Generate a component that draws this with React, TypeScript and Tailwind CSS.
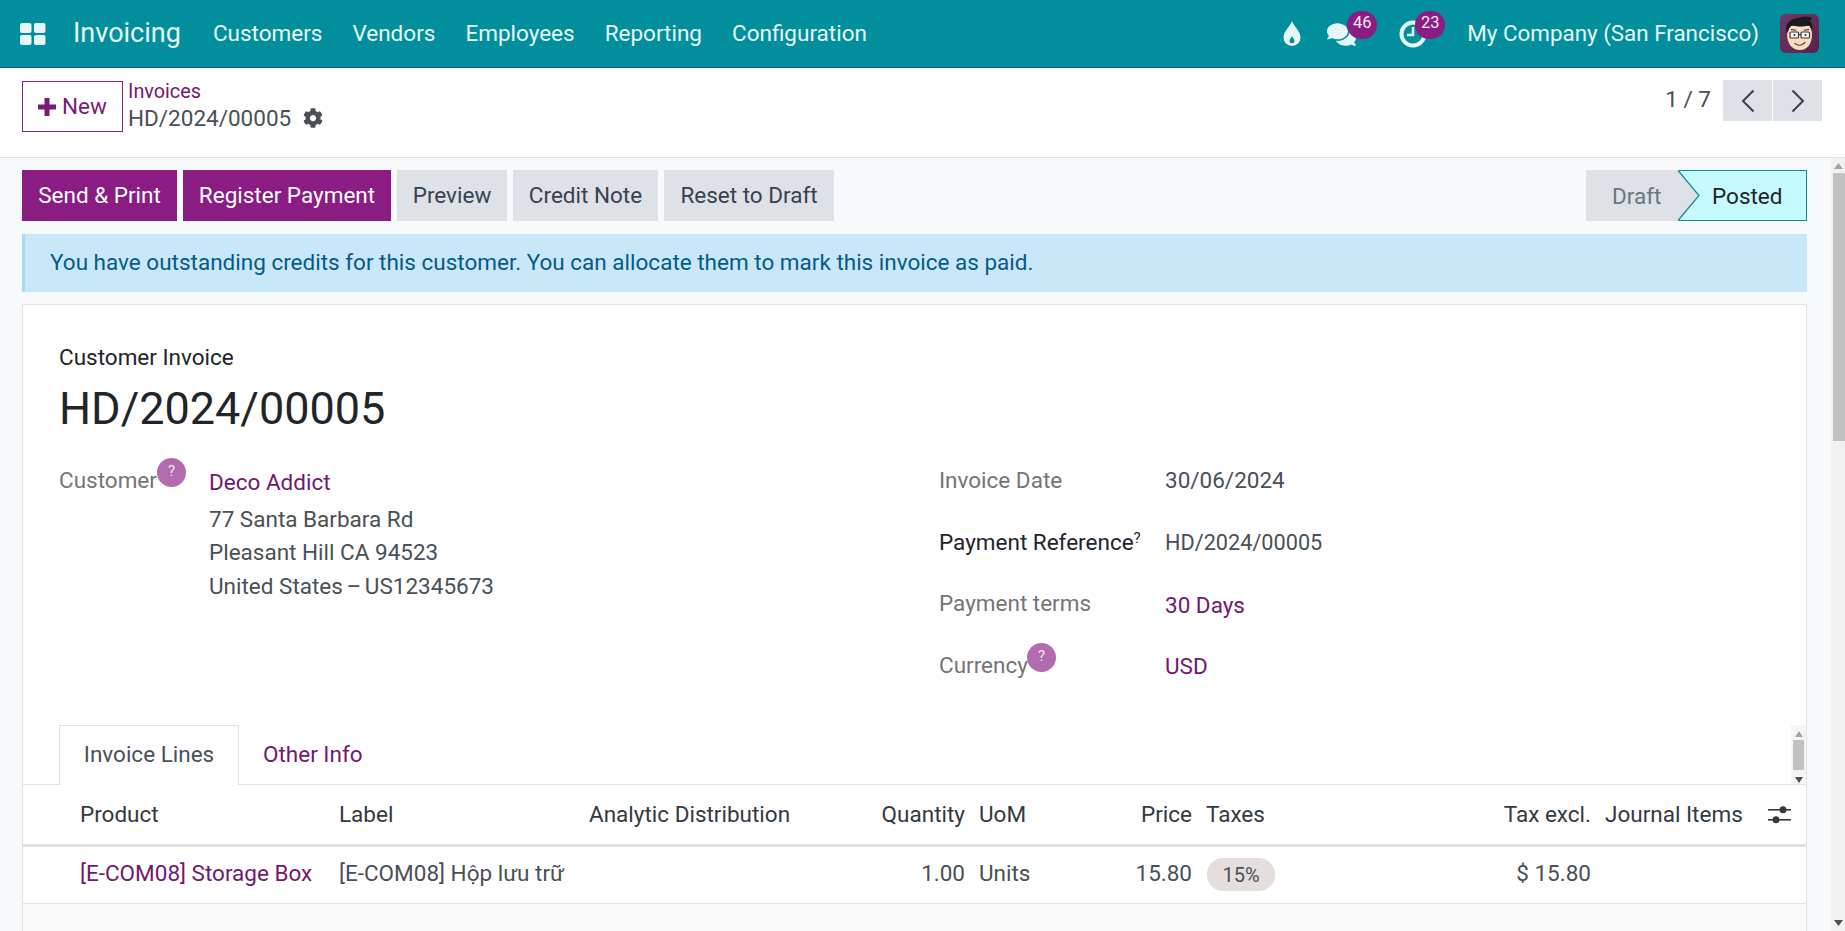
import { FaCog, FaComments } from "react-icons/fa";

const navItems = ["Customers", "Vendors", "Employees", "Reporting", "Configuration"];

function AppsIcon() {
  return (
    <svg width="26" height="22" viewBox="0 0 26 22" fill="#e6f6f7">
      <rect x="0" y="0" width="11.5" height="10" rx="2" />
      <rect x="14" y="0" width="11.5" height="10" rx="2" />
      <rect x="0" y="12" width="11.5" height="10" rx="2" />
      <rect x="14" y="12" width="11.5" height="10" rx="2" />
    </svg>
  );
}

function DropIcon() {
  return (
    <svg width="18" height="26" viewBox="0 0 18 26">
      <path d="M9 0c1.500 5 8.500 10 8.500 16.500a8.500 8.500 0 0 1-17 0C.5 10 7.500 5 9 0z" fill="#e6f6f7" />
      <path d="M9 15c.6 1.800 2.500 3 2.500 4.800a2.500 2.500 0 0 1-5 0C6.500 18 8.400 16.800 9 15z" fill="#018f9e" />
    </svg>
  );
}

function ClockIcon() {
  return (
    <svg width="28" height="28" viewBox="0 0 28 28" fill="none" stroke="#e6f6f7">
      <circle cx="14" cy="14" r="11.500" strokeWidth="4" />
      <path d="M14 7v8H8" strokeWidth="2.500" />
    </svg>
  );
}

function Avatar() {
  return (
    <svg width="39" height="39" viewBox="0 0 39 39">
      <defs>
        <linearGradient id="avatarBg" x1="0" y1="0" x2="1" y2="1">
          <stop offset="0" stopColor="#6e3a68" />
          <stop offset="1" stopColor="#5a1f45" />
        </linearGradient>
      </defs>
      <rect width="39" height="39" rx="6" fill="url(#avatarBg)" />
      <path d="M7 19c0 11 5 17 13 17s12-7 12-16l-1-8H8z" fill="#f9dcc4" />
      <path d="M7 20C4 11 9 4 19 4c4-2 9-2 13 0l-2 3c2 2 3 6 2 10l-3-6c-5 2-12 2-16 0-3 1-4 4-6 9z" fill="#1b1b20" />
      <path d="M11 15.500l5 .7M24 16.200l5-.7" stroke="#2a2a2e" strokeWidth="1.100" />
      <rect x="10" y="18" width="8.500" height="6" rx="1" fill="#fbf5ec" stroke="#3a3a3e" strokeWidth="1.200" />
      <rect x="21" y="18" width="8.500" height="6" rx="1" fill="#fbf5ec" stroke="#3a3a3e" strokeWidth="1.200" />
      <path d="M18.500 20.500h2.500" stroke="#3a3a3e" strokeWidth="1.100" />
      <circle cx="14.500" cy="21" r="1" fill="#2a2a2e" />
      <circle cx="25.500" cy="21" r="1" fill="#2a2a2e" />
      <path d="M15 29.500c3 2.500 7 2 10-1" stroke="#7c3a2e" strokeWidth="1.200" fill="none" strokeLinecap="round" />
    </svg>
  );
}

function Count({ value, className }: { value: number; className: string }) {
  return (
    <span className={`absolute top-[11px] flex h-[28px] w-[30px] items-center justify-center rounded-full bg-[#8a1c83] pb-[3px] text-[16.500px] text-[#f2e6f1] ${className}`}>
      {value}
    </span>
  );
}

function Help({ className }: { className: string }) {
  return (
    <span className={`absolute flex h-[29px] w-[29px] items-center justify-center rounded-full bg-[#b36bb0] pb-[3px] text-[15px] text-[#f2e3f1] ${className}`}>
      ?
    </span>
  );
}

function Navbar() {
  return (
    <header className="flex h-[68px] shrink-0 items-center border-b border-[#0b6570] bg-[#018f9e] text-[#e6f6f7]">
      <div className="ml-[20px]">
        <AppsIcon />
      </div>
      <span className="ml-[27px] text-[27px]">Invoicing</span>
      <nav className="ml-[32px] flex gap-[30px] text-[22.500px]">
        {navItems.map((item) => (
          <span key={item}>{item}</span>
        ))}
      </nav>
      <div className="ml-auto flex items-center">
        <DropIcon />
        <div className="relative ml-[26px] flex h-[67px] w-[29px] items-center">
          <FaComments className="mt-[1px] text-[29px]" />
          <Count value={46} className="left-[20px]" />
        </div>
        <div className="relative ml-[43px] flex h-[67px] w-[28px] items-center">
          <ClockIcon />
          <Count value={23} className="left-[16px]" />
        </div>
        <span className="ml-[40px] text-[22.400px]">My Company (San Francisco)</span>
        <div className="ml-[21px] mr-[26px] h-[39px]">
          <Avatar />
        </div>
      </div>
    </header>
  );
}

function ControlPanel() {
  return (
    <div className="flex h-[90px] shrink-0 border-b border-[#dee2e6] bg-white">
      <button className="ml-[22px] mt-[13px] flex h-[51px] w-[101px] items-center justify-center gap-[6px] border border-[#7c2a78] text-[22.500px] text-[#7a1c76]">
        <svg width="18" height="18" viewBox="0 0 18 18" fill="#7a1c76">
          <path d="M6.500 0h5v6.500H18v5h-6.500V18h-5v-6.500H0v-5h6.500z" />
        </svg>
        New
      </button>
      <div className="ml-[5px] mt-[11px] flex flex-col">
        <span className="text-[19.800px] leading-[26px] text-[#71196f]">Invoices</span>
        <div className="-mt-px flex items-center gap-[12px] text-[22.500px] leading-[28px] text-[#495057]">
          HD/2024/00005
          <FaCog className="text-[20px]" />
        </div>
      </div>
      <div className="ml-auto mr-[23px] mt-[12px] flex h-[41px]">
        <span className="mr-[12px] text-[22.500px] leading-[38px] text-[#495057]">1 / 7</span>
        <button className="flex w-[49px] items-center justify-center bg-[#dee2e6]">
          <svg width="14" height="24" viewBox="0 0 14 24" fill="none" stroke="#374151" strokeWidth="2">
            <path d="M12.500 1.500 2 12l10.500 10.500" />
          </svg>
        </button>
        <button className="ml-[1px] flex w-[49px] items-center justify-center bg-[#dee2e6]">
          <svg width="14" height="24" viewBox="0 0 14 24" fill="none" stroke="#374151" strokeWidth="2">
            <path d="M1.500 1.500 12 12 1.500 22.500" />
          </svg>
        </button>
      </div>
    </div>
  );
}

function ActionBar() {
  return (
    <div className="mt-[12px] flex h-[51px] shrink-0 items-stretch text-[22.500px]">
      <button className="w-[155px] bg-[#8a1c83] text-white">Send &amp; Print</button>
      <button className="ml-[6px] w-[208px] bg-[#8a1c83] text-white">Register Payment</button>
      <button className="ml-[6px] w-[110px] bg-[#dee2e6] text-[#374151]">Preview</button>
      <button className="ml-[6px] w-[145px] bg-[#dee2e6] text-[#374151]">Credit Note</button>
      <button className="ml-[6px] w-[170px] bg-[#dee2e6] text-[#374151]">Reset to Draft</button>
      <div className="ml-auto flex">
        <div className="flex w-[92px] items-center bg-[#dee2e6] pl-[26px] pt-[2px] text-[#6c757d]">Draft</div>
        <div className="relative flex w-[129px] items-center border-y border-r border-[#118a96] bg-[#c5fbff] pl-[34px] pt-[2px] text-[#212529]">
          <svg className="absolute -top-px left-0" width="23" height="51" viewBox="0 0 23 51">
            <path d="M0 0 21 25.500 0 51z" fill="#dee2e6" />
            <path d="M0 .5 21 25.500 0 50.500" fill="none" stroke="#118a96" strokeWidth="1.200" />
          </svg>
          Posted
        </div>
      </div>
    </div>
  );
}

function InvoiceHeader() {
  return (
    <div className="flex pl-[36px]">
      <div className="relative w-[880px] text-[22.500px]">
        <div className="pt-[16px] leading-[30px] text-[#757575]">Customer</div>
        <Help className="left-[98px] top-[9px]" />
        <div className="absolute left-[150px] top-0 pt-[18px] text-[#495057]">
          <div className="leading-[30px] text-[#71196f]">Deco Addict</div>
          <div className="mt-[6px] leading-[33.300px]">
            77 Santa Barbara Rd
            <br />
            Pleasant Hill CA 94523
            <br />
            United States <span className="mx-[-2px]">–</span> US12345673
          </div>
        </div>
      </div>
      <div className="pt-px text-[22.500px]">
        <div className="flex h-[62px] items-center">
          <span className="w-[226px] text-[#757575]">Invoice Date</span>
          <span className="text-[#495057]">30/06/2024</span>
        </div>
        <div className="flex h-[62px] items-center">
          <span className="w-[226px] text-[#212529]">
            Payment Reference<sup className="text-[15px]">?</sup>
          </span>
          <span className="text-[21.700px] text-[#495057]">HD/2024/00005</span>
        </div>
        <div className="flex h-[62px] items-center">
          <span className="mb-[2px] w-[226px] text-[#757575]">Payment terms</span>
          <span className="mt-[2px] text-[#71196f]">30 Days</span>
        </div>
        <div className="relative flex h-[62px] items-center">
          <span className="mb-[2px] w-[226px] text-[#757575]">Currency</span>
          <span className="text-[#71196f]">USD</span>
          <Help className="left-[88px] top-[7px]" />
        </div>
      </div>
    </div>
  );
}

function Tabs() {
  return (
    <div className="relative mt-[27px] flex h-[60px] border-b border-[#dee2e6] pl-[36px] text-[22.500px]">
      <div className="flex h-[60px] w-[180px] items-center justify-center border-x border-t border-[#dee2e6] bg-white pb-[2px] text-[#495057]">
        Invoice Lines
      </div>
      <div className="ml-[24px] flex items-center text-[#71196f]">Other Info</div>
      <div className="absolute right-0 top-0 flex h-[59px] w-[15px] flex-col items-center bg-[#f5f5f5]">
        <svg className="mt-[6px]" width="8" height="6" viewBox="0 0 8 6" fill="#a3a3a3">
          <path d="M4 0 8 6H0z" />
        </svg>
        <div className="mt-[3px] h-[30px] w-[11px] bg-[#c1c1c1]" />
        <svg className="mt-[7px]" width="8" height="6" viewBox="0 0 8 6" fill="#505050">
          <path d="M4 6 8 0H0z" />
        </svg>
      </div>
    </div>
  );
}

function Lines() {
  const cols = "grid grid-cols-[316px_250px_211px_165px_120px_107px_209px_190px_169px_1fr] items-center";
  return (
    <div>
      <div className={`${cols} h-[62px] border-b-[3px] border-[#dee2e6] text-[22.500px] text-[#343a40]`}>
        <span className="pl-[57px]">Product</span>
        <span>Label</span>
        <span>Analytic Distribution</span>
        <span className="text-right">Quantity</span>
        <span className="pl-[14px]">UoM</span>
        <span className="text-right">Price</span>
        <span className="pl-[14px]">Taxes</span>
        <span className="text-right">Tax excl.</span>
        <span className="pl-[14px]">Journal Items</span>
        <svg className="ml-[8px]" width="23" height="22" viewBox="0 0 23 22" fill="#343a40">
          <rect x="0" y="5" width="23" height="1.600" />
          <circle cx="15" cy="5.800" r="3.500" />
          <rect x="0" y="15" width="23" height="1.600" />
          <circle cx="8" cy="15.800" r="3.500" />
        </svg>
      </div>
      <div className={`${cols} h-[57px] border-b border-[#dee2e6] bg-white pb-[2px] text-[22.500px] text-[#495057]`}>
        <span className="whitespace-nowrap pl-[57px] text-[#71196f]">[E-COM08] Storage Box</span>
        <span className="overflow-hidden whitespace-nowrap">[E-COM08] Hộp lưu trữ</span>
        <span />
        <span className="text-right">1.00</span>
        <span className="pl-[14px]">Units</span>
        <span className="text-right">15.80</span>
        <span className="pl-[15px]">
          <span className="flex h-[33px] w-[68px] items-center justify-center rounded-[16px] bg-[#e6dddd] pt-[2px] text-[20px]">15%</span>
        </span>
        <span className="text-right">$ 15.80</span>
        <span />
        <span />
      </div>
    </div>
  );
}

function PageScrollbar() {
  return (
    <div className="flex w-[14px] shrink-0 flex-col items-center bg-[#f1f1f1]">
      <svg className="mt-[5px]" width="9" height="6" viewBox="0 0 9 6" fill="#a3a3a3">
        <path d="M4.500 0 9 6H0z" />
      </svg>
      <div className="ml-[2px] mt-[4px] h-[268px] w-[12px] bg-[#c1c1c1]" />
      <svg className="mb-[5px] mt-auto" width="9" height="6" viewBox="0 0 9 6" fill="#505050">
        <path d="M4.500 6 9 0H0z" />
      </svg>
    </div>
  );
}

export default function App() {
  return (
    <div className="flex h-[931px] w-[1845px] flex-col overflow-hidden bg-[#f8f9fa] font-['Roboto',sans-serif]">
      <Navbar />
      <ControlPanel />
      <div className="flex min-h-0 flex-1">
        <main className="ml-[22px] flex w-[1785px] shrink-0 flex-col">
          <ActionBar />
          <div className="mt-[13px] flex h-[58px] shrink-0 items-center border-l-[3px] border-[#a9d8f3] bg-[#c8e8fa] pl-[25px] text-[22.500px] text-[#055a87]">
            You have outstanding credits for this customer. You can allocate them to mark this invoice as paid.
          </div>
          <section className="mt-[12px] flex-1 border-x border-t border-[#dee2e6] bg-[#fbfbfb]">
            <div className="bg-white">
              <div className="pl-[36px] pt-[38px]">
                <div className="text-[22.500px] leading-[28px] text-[#212529]">Customer Invoice</div>
                <div className="mt-[10px] text-[45px] leading-[56px] text-[#212529]">HD/2024/00005</div>
              </div>
              <div className="mt-[12px]">
                <InvoiceHeader />
              </div>
              <Tabs />
              <Lines />
            </div>
          </section>
        </main>
        <div className="ml-[24px] flex">
          <PageScrollbar />
        </div>
      </div>
    </div>
  );
}
